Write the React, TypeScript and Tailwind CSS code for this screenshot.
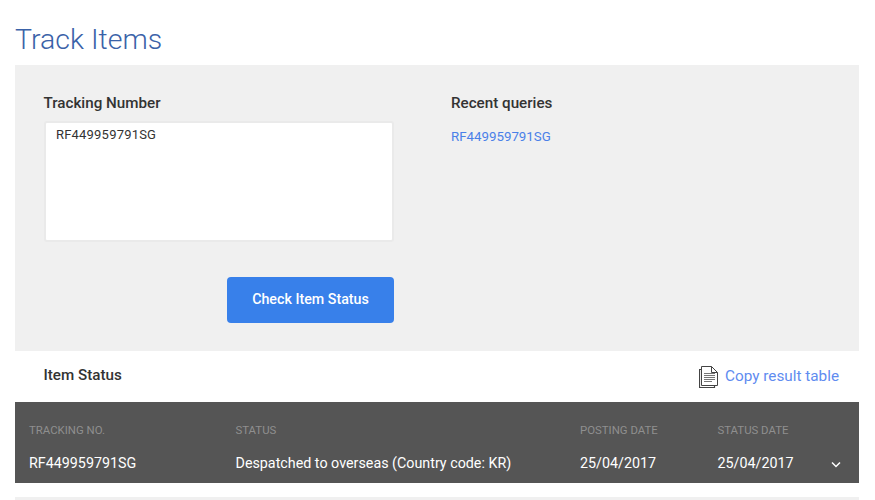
import React from "react";

function CopyIcon() {
  return (
    <svg width="19" height="22" viewBox="0 0 19 22" fill="none" stroke="#444" strokeWidth="1">
      <path d="M2.5 3.5H0.5V21.5H15.5V19.5" strokeWidth="1.2" />
      <path d="M2.5 0.5H12.5L18.5 6.5V19.5H2.5Z" fill="#fff" />
      <path d="M12.5 0.5V6.5H18.5" />
      <path d="M5 7.5H16M5 9.5H16M5 11.5H16M5 13.5H16M5 15.5H13" stroke="#777" />
    </svg>
  );
}

export default function App() {
  return (
    <div className="w-[875px] h-[500px] overflow-hidden bg-white pl-[15px] pr-[16px] font-['Roboto',sans-serif]">
      <h1 className="h-[65px] pt-[22px] text-[28.5px] leading-[36px] font-light text-[#3a62a8]">Track Items</h1>

      <section className="h-[286px] bg-[#f0f0f0] pl-[28.5px] pt-[28px] flex">
        <div className="w-[350.5px] flex flex-col">
          <label className="text-[15.2px] leading-[20px] font-medium text-[#333]">Tracking Number</label>
          <div className="mt-[8px] h-[121px] rounded-[3px] border-2 border-[#eaeaea] bg-white px-[10.5px] py-[4px] text-[13px] leading-[16px] tracking-[0.2px] text-[#333]">
            RF449959791SG
          </div>
          <button className="mt-[35px] ml-auto h-[46px] w-[167px] rounded-[4px] bg-[#3880ea] pb-[1px] text-[14.25px] font-medium text-white">
            Check Item Status
          </button>
        </div>
        <div className="ml-[57px] flex flex-col">
          <h2 className="text-[15.2px] leading-[20px] font-medium text-[#333]">Recent queries</h2>
          <a className="mt-[16px] text-[13.3px] leading-[16px] text-[#4a80e8]">RF449959791SG</a>
        </div>
      </section>

      <div className="h-[51px] flex items-center justify-between pl-[28.5px] pr-[20px]">
        <span className="pb-[2px] text-[15.2px] font-medium text-[#333]">Item Status</span>
        <span className="flex items-center gap-[7px] text-[15.3px] text-[#5f8cf0]">
          <CopyIcon />
          Copy result table
        </span>
      </div>

      <div className="h-[81px] bg-[#555555] grid grid-cols-[206.5px_344.5px_137.5px_1fr] pl-[14px] pt-[21px] relative">
        <div className="flex flex-col">
          <span className="text-[11.4px] leading-[14px] text-[#8f8f8f]">TRACKING NO.</span>
          <span className="mt-[17px] text-[14.3px] leading-[18px] text-white">RF449959791SG</span>
        </div>
        <div className="flex flex-col">
          <span className="text-[11.4px] leading-[14px] text-[#8f8f8f]">STATUS</span>
          <span className="mt-[17px] text-[14.3px] leading-[18px] text-white">Despatched to overseas (Country code: KR)</span>
        </div>
        <div className="flex flex-col">
          <span className="text-[11.4px] leading-[14px] text-[#8f8f8f]">POSTING DATE</span>
          <span className="mt-[17px] text-[14.3px] leading-[18px] text-white">25/04/2017</span>
        </div>
        <div className="flex flex-col">
          <span className="text-[11.4px] leading-[14px] text-[#8f8f8f]">STATUS DATE</span>
          <span className="mt-[17px] text-[14.3px] leading-[18px] text-white">25/04/2017</span>
        </div>
        <svg className="absolute right-[18px] bottom-[15px]" width="10" height="7" viewBox="0 0 10 7" fill="none" stroke="#fff" strokeWidth="1.5">
          <path d="M1 1.5L5 5.5L9 1.5" />
        </svg>
      </div>

      <div className="mt-[14px] h-[3px] bg-[#f0f0f0]" />
    </div>
  );
}
